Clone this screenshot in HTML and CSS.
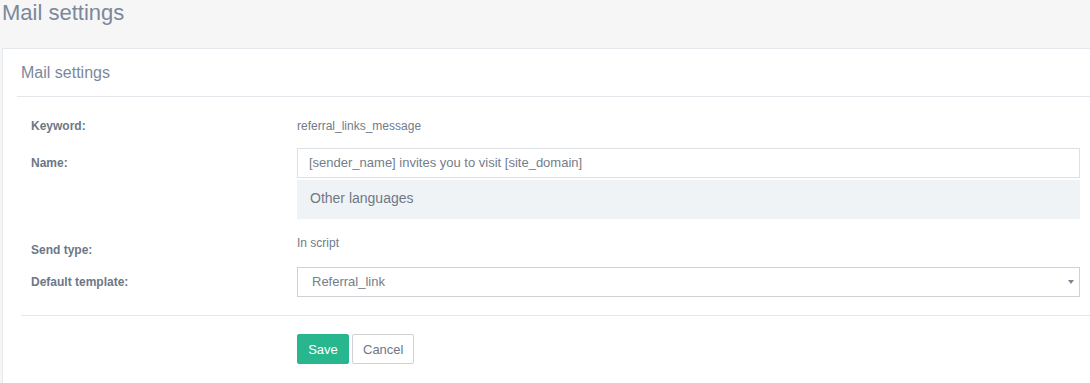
FILE: index.html
```html
<!DOCTYPE html>
<html lang="en">
<head>
  <meta charset="UTF-8">
  <title>Mail settings</title>
  <link rel="stylesheet" href="styles.css">
</head>
<body>

<header class="page-head">
  <h1>Mail settings</h1>
</header>

<div class="panel">
  <div class="panel-head">
    <h2>Mail settings</h2>
  </div>

  <div class="form">
    <div class="row row-keyword">
      <div class="label">Keyword:</div>
      <div class="value">referral_links_message</div>
    </div>

    <div class="row row-name">
      <div class="label label-input">Name:</div>
      <div class="value">
        <div class="input">[sender_name] invites you to visit [site_domain]</div>
        <div class="langs">Other languages</div>
      </div>
    </div>

    <div class="row row-send">
      <div class="label label-low">Send type:</div>
      <div class="value">In script</div>
    </div>

    <div class="row row-template">
      <div class="label label-input">Default template:</div>
      <div class="value">
        <div class="select">
          <span>Referral_link</span>
          <span class="caret"></span>
        </div>
      </div>
    </div>
  </div>

  <div class="actions">
    <button class="btn btn-save">Save</button>
    <button class="btn btn-cancel">Cancel</button>
  </div>
</div>

</body>
</html>
```

FILE: styles.css
```css
body {
  margin: 0;
  font-family: "Liberation Sans", Arial, sans-serif;
  background-color: #f6f6f6;
  color: #727b88;
}

.page-head {
  height: 48px;
}

.page-head h1 {
  margin: 0;
  padding: 0 0 0 2px;
  font-size: 22px;
  font-weight: normal;
  line-height: 25px;
  color: #7b889c;
}

.panel {
  margin-left: 2px;
  background: #fff;
  border-top: 1px solid #e5e8ec;
  border-left: 1px solid #e5e8ec;
  height: 334px;
}

.panel-head {
  margin-left: 14px;
  height: 47px;
  border-bottom: 1px solid #e3e6ea;
  display: flex;
  align-items: center;
}

.panel-head h2 {
  margin: 0;
  padding: 0 0 0 4px;
  font-size: 16px;
  font-weight: normal;
  color: #7b889c;
}

.form {
  padding: 19px 10px 0 28px;
}

.row {
  display: flex;
  font-size: 12px;
}

.label {
  width: 266px;
  flex-shrink: 0;
  font-weight: bold;
  color: #6d7786;
  line-height: 20px;
}

.label-input {
  line-height: 30px;
}

.label-low {
  padding-top: 7px;
}

.value {
  flex: 1;
  line-height: 20px;
}

.row-name {
  margin-top: 12px;
}

.row-send {
  margin-top: 14px;
}

.row-template {
  margin-top: 7px;
}

.input,
.select {
  height: 28px;
  border: 1px solid #dcdfe3;
  padding: 0 11px;
  font-size: 13px;
  line-height: 28px;
  color: #747d8a;
}

.select {
  border-color: #cfd1d4;
  padding-left: 14px;
  display: flex;
  justify-content: space-between;
  align-items: center;
}

.caret {
  width: 0;
  height: 0;
  border-left: 3px solid transparent;
  border-right: 3px solid transparent;
  border-top: 4px solid #7b8593;
  margin-right: -6px;
}

.langs {
  margin-top: 2px;
  height: 39px;
  background: #f0f3f6;
  padding-left: 13px;
  font-size: 14px;
  line-height: 37px;
  color: #6f7887;
}

.actions {
  margin: 18px 0 0 18px;
  border-top: 1px solid #e3e6ea;
  padding: 18px 0 0 276px;
  display: flex;
  gap: 3px;
}

.btn {
  height: 30px;
  font-family: inherit;
  font-size: 13px;
  border-radius: 2px;
  padding: 0 10px;
  cursor: pointer;
}

.btn-save {
  width: 52px;
  background: #27b68e;
  border: 1px solid #27b68e;
  color: #fff;
}

.btn-cancel {
  width: 62px;
  background: #fff;
  border: 1px solid #cfd1d4;
  color: #6d7786;
}
```
